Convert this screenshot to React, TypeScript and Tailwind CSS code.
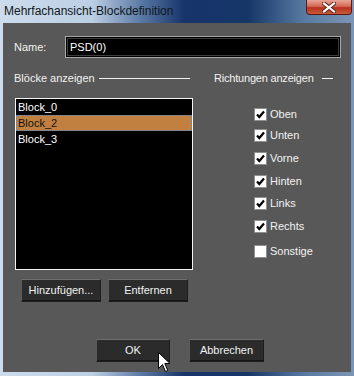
import React from "react";

const font = { fontFamily: '"Segoe UI", "Liberation Sans", Arial, sans-serif' };

function Check({ checked }: { checked: boolean }) {
  return (
    <div className="w-[13px] h-[13px] bg-white border border-[#8e8f8f] flex items-center justify-center shrink-0">
      {checked && (
        <svg width="11" height="11" viewBox="0 0 11 11">
          <polyline points="2,5.5 4.3,8 9,2.5" fill="none" stroke="#000" strokeWidth="2.2" />
        </svg>
      )}
    </div>
  );
}

function Btn({ label, w }: { label: string; w: string }) {
  return (
    <div
      className={`${w} h-[23px] bg-[#2b2b2b] border border-[#1d1d1d] border-t-[#6e6e6e] border-l-[#5a5a5a] shadow-[inset_0_-1px_0_#161616] flex items-center justify-center text-[11px] text-[#f2f2f2] whitespace-nowrap`}
    >
      {label}
    </div>
  );
}

export default function App() {
  const checks: { label: string; checked: boolean; mt: string }[] = [
    { label: "Oben", checked: true, mt: "mt-0" },
    { label: "Unten", checked: true, mt: "mt-[5px]" },
    { label: "Vorne", checked: true, mt: "mt-[7px]" },
    { label: "Hinten", checked: true, mt: "mt-[7px]" },
    { label: "Links", checked: true, mt: "mt-[6px]" },
    { label: "Rechts", checked: true, mt: "mt-[7px]" },
    { label: "Sonstige", checked: false, mt: "mt-[9px]" },
  ];
  return (
    <div
      className="relative w-[354px] h-[376px] overflow-hidden bg-[linear-gradient(90deg,#cddcec_0%,#bccfe4_26%,#5a78a4_40%,#17346b_52%,#163668_70%,#587aa2_86%,#7c95b6_100%)]"
      style={font}
    >
      {/* title bar */}
      <div className="h-[23px] flex items-start">
        <span className="pl-[4px] pt-[3px] text-[12px] leading-[16px] text-[#101820] whitespace-nowrap">
          Mehrfachansicht-Blockdefinition
        </span>
        <div className="ml-auto mr-[2px] w-[46px] h-[15px] rounded-b-[4px] border border-t-0 border-[#5a1a12] bg-[linear-gradient(180deg,#e9a596_0%,#d46a55_45%,#b8321c_55%,#c85a3a_100%)] flex items-center justify-center">
          <svg width="14" height="11" viewBox="0 0 14 11">
            <path d="M2 1.5 L12 9.5 M12 1.5 L2 9.5" stroke="#5a2018" strokeWidth="4" strokeLinecap="square" />
            <path d="M2 1.5 L12 9.5 M12 1.5 L2 9.5" stroke="#ffffff" strokeWidth="2.2" strokeLinecap="square" />
          </svg>
        </div>
      </div>

      {/* content */}
      <div className="mx-[3px] h-[349px] bg-[#585858] flex flex-col text-[11px] text-[#f2f2f2]">
        {/* name row */}
        <div className="mt-[13px] h-[22px] flex items-center">
          <span className="pl-[11px] w-[62px] shrink-0">Name:</span>
          <div className="w-[276px] h-[22px] border border-[#a8a8a8] bg-black p-[1px]">
            <div className="w-full h-full border border-[#3c3c3c] flex items-center pl-[2px] text-white">
              PSD(0)
            </div>
          </div>
        </div>

        {/* section headers */}
        <div className="mt-[12px] h-[16px] flex items-center whitespace-nowrap">
          <span className="pl-[11px] w-[96px] shrink-0">Blöcke anzeigen</span>
          <div className="w-[91px] h-[1px] bg-[#f0f0f0] shrink-0" />
          <span className="ml-[24px] w-[108px] shrink-0 tracking-[-0.2px]">Richtungen anzeigen</span>
          <div className="w-[11px] h-[1px] bg-[#f0f0f0] shrink-0" />
        </div>

        {/* main */}
        <div className="mt-[12px] flex">
          <div className="ml-[12px] w-[178px] h-[172px] bg-black border border-[#f4f4f4] flex flex-col">
            <div className="h-[16px] pl-[2px] flex items-center text-white">Block_0</div>
            <div className="h-[16px] pl-[1px] flex items-center bg-[#c1803f] border border-dotted border-[#4b86c8] text-[#111]">
              Block_2
            </div>
            <div className="h-[16px] pl-[2px] flex items-center text-white">Block_3</div>
          </div>
          <div className="ml-[61px] pt-[8px] flex flex-col">
            {checks.map((c) => (
              <div key={c.label} className={`${c.mt} h-[16px] flex items-center gap-[3px]`}>
                <Check checked={c.checked} />
                <span>{c.label}</span>
              </div>
            ))}
          </div>
        </div>

        {/* list buttons */}
        <div className="mt-[9px] flex pl-[18px] gap-[7px]">
          <Btn label="Hinzufügen..." w="w-[80px]" />
          <Btn label="Entfernen" w="w-[80px]" />
        </div>

        {/* dialog buttons */}
        <div className="mt-[37px] flex pl-[93px] gap-[19px]">
          <Btn label="OK" w="w-[74px]" />
          <Btn label="Abbrechen" w="w-[75px]" />
        </div>
      </div>

      {/* mouse cursor */}
      <svg className="absolute left-[158px] top-[352px]" width="13" height="21" viewBox="0 0 13 21">
        <path
          d="M0.5 0.5 L0.5 16.5 L4.5 12.5 L7.5 19.5 L9.8 18.5 L6.8 11.5 L12 11.5 Z"
          fill="#ffffff"
          stroke="#000000"
          strokeWidth="1"
          strokeLinejoin="miter"
        />
      </svg>
    </div>
  );
}
